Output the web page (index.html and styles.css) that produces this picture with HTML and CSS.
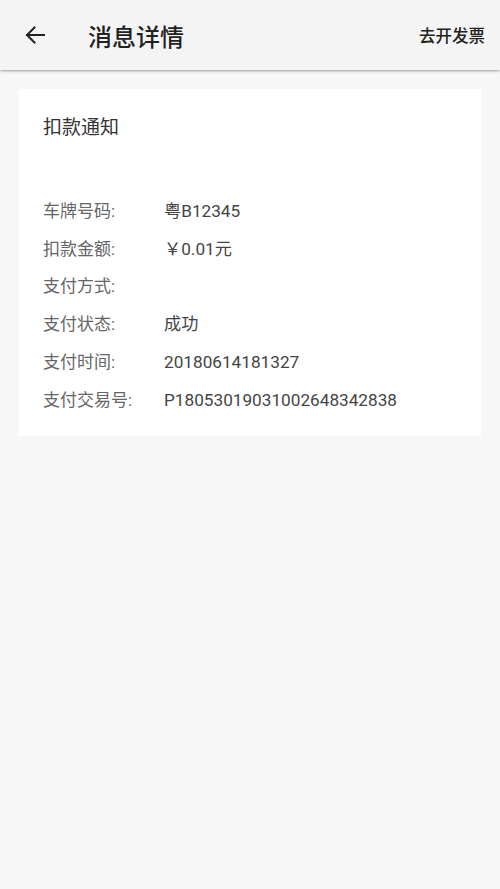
FILE: index.html
```html
<!DOCTYPE html>
<html lang="zh">
<head>
<meta charset="utf-8">
<title>消息详情</title>
<link rel="stylesheet" href="styles.css">
</head>
<body>
<header class="topbar">
  <div class="back">
    <svg width="22" height="20" viewBox="0 0 22 20"><path d="M20 10H3M10.5 2.5L3 10l7.5 7.5" fill="none" stroke="#222" stroke-width="2" stroke-linecap="square"/></svg>
  </div>
  <h1 class="title">消息详情</h1>
  <div class="action">去开发票</div>
</header>
<main class="content">
  <section class="card">
    <h2 class="card-title">扣款通知</h2>
    <div class="rows">
      <div class="row"><span class="label">车牌号码:</span><span class="value">粤B12345</span></div>
      <div class="row"><span class="label">扣款金额:</span><span class="value">￥0.01元</span></div>
      <div class="row"><span class="label">支付方式:</span><span class="value"></span></div>
      <div class="row"><span class="label">支付状态:</span><span class="value">成功</span></div>
      <div class="row"><span class="label">支付时间:</span><span class="value">20180614181327</span></div>
      <div class="row"><span class="label">支付交易号:</span><span class="value">P18053019031002648342838</span></div>
    </div>
  </section>
</main>
</body>
</html>
```

FILE: styles.css
```css
html, body {
  margin: 0;
  padding: 0;
}
body {
  width: 500px;
  height: 889px;
  background: #f7f7f7;
  font-family: Roboto, "Noto Sans CJK SC", sans-serif;
  overflow: hidden;
}
.topbar {
  height: 70px;
  background: #f4f4f4;
  display: flex;
  align-items: center;
  box-shadow: 0 1px 2px rgba(0,0,0,0.28), 0 2px 4px rgba(0,0,0,0.08);
  position: relative;
  z-index: 1;
}
.back {
  width: 22px;
  height: 20px;
  margin-left: 24px;
  display: flex;
}
.title {
  margin: 0 0 0 42px;
  font-size: 24px;
  font-weight: 500;
  color: #222;
  flex: 1;
}
.action {
  margin-right: 15px;
  font-size: 16.5px;
  color: #222;
  font-weight: 500;
}
.content {
  padding: 19px 19px 0;
}
.card {
  background: #fff;
  padding: 26px 24px 17px;
}
.card-title {
  margin: 0;
  font-size: 19px;
  font-weight: 400;
  color: #333;
  line-height: 26px;
}
.rows {
  margin-top: 51px;
  display: flex;
  flex-direction: column;
}
.row {
  display: flex;
  height: 37.8px;
  align-items: center;
  font-size: 17px;
  line-height: 22px;
}
.label {
  width: 121px;
  color: #666;
}
.value {
  color: #444;
  font-size: 17.2px;
}
```
